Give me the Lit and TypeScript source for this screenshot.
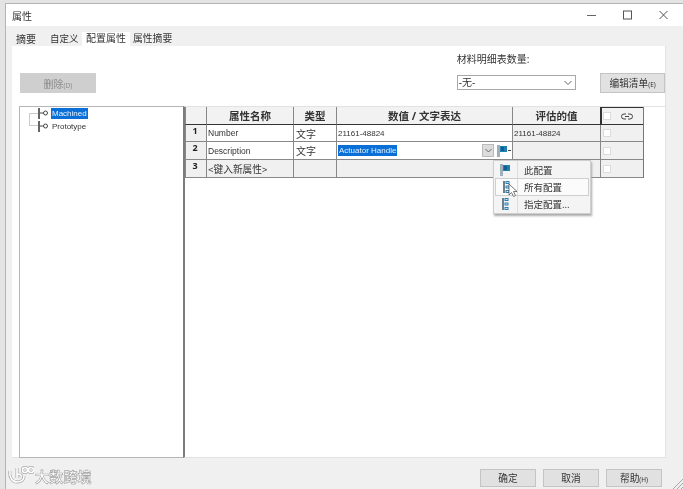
import { LitElement, html, css, svg, unsafeCSS } from "lit";
import { customElement } from "lit/decorators.js";

const FONT = unsafeCSS(`"Noto Sans", "Noto Sans CJK SC", sans-serif`);
const LATIN = unsafeCSS(`"Liberation Sans", "Noto Sans CJK SC", sans-serif`);

const flagIcon = svg`<svg width="11" height="12" viewBox="0 0 11 12"><rect x="0" y="0" width="3" height="12" fill="#9fb0bc"/><path d="M3 1h7v6H3z" fill="#1f7fb0"/><rect x="4" y="2" width="3" height="4" fill="#0f5f90"/></svg>`;
const stackIcon = svg`<svg width="7" height="12" viewBox="0 0 7 12"><rect x="0" y="0" width="2" height="12" fill="#6d7f8e"/><g fill="#2a7fb0"><rect x="2.500" y="0" width="4" height="3"/><rect x="2.500" y="4.500" width="4" height="3"/><rect x="2.500" y="9" width="4" height="3"/></g><g fill="#dfe8ee"><rect x="3.500" y="1" width="2" height="1"/><rect x="3.500" y="5.500" width="2" height="1"/><rect x="3.500" y="10" width="2" height="1"/></g></svg>`;
const cfgIcon = svg`<svg width="12" height="11" viewBox="0 0 12 11"><path d="M1 0v11" stroke="#333" stroke-width="1.500"/><path d="M2 5h3.500" stroke="#444"/><circle cx="7.500" cy="5" r="2" fill="none" stroke="#444"/></svg>`;

@customElement("app-root")
export class AppRoot extends LitElement {
  static styles = css`
    :host { display: block; position: relative; width: 683px; height: 489px; overflow: hidden; background: #e4e4e4; font-family: ${FONT}; color: #333; filter: blur(0.4px); }
    .win { margin: 3px 0 0 5px; width: 678px; height: 486px; background: #f0f0f0; border: 1px solid #b4b4b4; border-right: 0; border-bottom: 0; box-sizing: border-box; display: flex; flex-direction: column; }
    .title { height: 22px; background: #fff; display: flex; align-items: center; padding-left: 6px; font-size: 10px; flex: none; }
    .title .t { flex: 1; }
    .caps { display: flex; align-items: center; gap: 27px; padding-right: 15px; }
    .tabs { height: 20px; display: flex; align-items: flex-end; padding-left: 6px; flex: none; font-size: 10px; }
    .tab { height: 14px; line-height: 14px; text-align: center; box-sizing: border-box; padding: 0 4px; white-space: nowrap; }
    .tab.second { margin-left: 6px; padding-right: 3.500px; font-size: 9.500px; }
    .tab.a { background: #fff; line-height: 12px; }
    .tab.last { padding-left: 3px; font-size: 9.800px; }
    .panel { margin-left: 6px; width: 654px; height: 412px; background: #fff; border-right: 1px solid #e2e2e2; border-bottom: 1px solid #e2e2e2; box-sizing: border-box; flex: none; display: flex; flex-direction: column; }
    .top { height: 60px; display: flex; flex: none; padding-left: 8px; box-sizing: border-box; }
    .del { margin-top: 27px; width: 76px; height: 20px; background: #cfcfcf; color: #8c8c8c; font-size: 10px; display: flex; align-items: center; justify-content: center; }
    .del small, .btn small { font-size: 6.500px; }
    .qty { margin-left: 361px; padding-top: 5px; width: 120px; font-size: 10px; }
    .sel { margin-top: 9px; width: 119px; height: 15px; border: 1px solid #a8a8a8; box-sizing: border-box; display: flex; align-items: center; justify-content: space-between; padding: 0 3px 0 1px; font-size: 10px; line-height: 13px; }
    .btn { background: #e1e1e1; border: 1px solid #c4c4c4; box-sizing: border-box; display: flex; align-items: center; justify-content: center; font-size: 9.700px; color: #333; white-space: nowrap; }
    .edit { margin: 27px 0 0 24px; width: 65px; height: 20px; }
    .main { height: 352px; display: flex; margin-left: 7px; flex: none; }
    .tree { width: 164px; height: 100%; border: 1px solid #b5b5b5; border-right: 0; box-sizing: border-box; position: relative; font-family: ${LATIN}; font-size: 8px; }
    .node { display: flex; align-items: center; height: 12px; margin-bottom: 1px; padding-left: 18px; gap: 1px; }
    .node span { padding: 0 1px; line-height: 11px; }
    .node .hl { background: #0a6fd6; color: #e8f2ff; }
    .branch { position: absolute; left: 9px; top: 6px; width: 9px; height: 13px; border: 1px solid #ccc; border-right: 0; box-sizing: border-box; }
    .right { flex: 1; border-left: 2px solid #7c7c7c; box-sizing: border-box; min-width: 0; border-bottom: 1px solid #e2e2e2; border-top: 1px solid #e2e2e2; }
    .grid { display: grid; grid-template-columns: 21px 87px 43px 176px 88px 43px; grid-template-rows: 18px 17px 18px 18px; width: 458px; border-right: 1px solid #777; box-sizing: content-box; }
    .c { border-left: 1px solid #888; border-bottom: 1px solid #888; box-sizing: border-box; display: flex; align-items: center; padding-left: 1px; font-family: ${LATIN}; font-size: 8px; min-width: 0; white-space: nowrap; background: #fff; }
    .c.lbl { font-size: 8.500px; }
    .c.g { background: #f0f0f0; }
    .h { border-bottom: 1px solid #333; justify-content: center; font-family: ${FONT}; font-weight: 700; font-size: 10.500px; background: #f2f2f2; padding-left: 0; color: #333; }
    .n { background: #f0f0f0; font-family: ${FONT}; font-weight: 700; font-size: 9px; justify-content: center; align-items: flex-start; padding: 0 2px 0 0; color: #222; line-height: 11px; }
    .zh { font-family: ${FONT}; font-size: 10px; padding-left: 2px; }
    .zh2 { font-family: ${FONT}; font-size: 9.700px; }
    .selText { background: #0a6fd6; color: #e0efff; padding: 0 1px; line-height: 11px; }
    .v { justify-content: space-between; padding-right: 0; }
    .dropwrap { display: flex; align-items: center; }
    .drop { width: 12px; height: 13px; background: #dcdcdc; border: 1px solid #bbb; box-sizing: border-box; display: flex; align-items: center; justify-content: center; }
    .fbtn { width: 18px; height: 15px; display: flex; align-items: center; padding-left: 3px; box-sizing: border-box; }
    .chk { width: 8px; height: 8px; background: #fff; border: 1px solid #dcdcdc; box-sizing: border-box; margin-left: 1px; }
    .hc { justify-content: flex-start; padding-left: 0; border-left: 2px solid #333; gap: 10px; border-bottom: 1px solid #333; border-top: 1px solid #333; background: #f2f2f2; }
    .menu { position: absolute; left: 493px; top: 160px; width: 98px; height: 54px; background: #f4f4f4; border: 1px solid #cfcfcf; box-sizing: border-box; box-shadow: 1px 2px 2px #aaa; font-size: 9.500px; }
    .mi { height: 17.300px; display: flex; align-items: center; box-sizing: border-box; }
    .mi .ic { width: 23px; display: flex; justify-content: center; flex: none; border-right: 1px solid #ddd; height: 100%; align-items: center; }
    .mi .lb { padding-left: 6px; }
    .mi.on { background: #fbfbfb; border: 1px solid #cfcfcf; margin: 0 1px; }
    .mi.on .ic { width: 21px; }
    .cursor { position: absolute; left: 508px; top: 183px; }
    .foot { flex: 1; position: relative; display: flex; justify-content: flex-end; padding: 11px 21px 0 0; gap: 7px; box-sizing: border-box; }
    .foot .btn { width: 56px; height: 18px; }
    .wm { position: absolute; left: 29px; top: 8px; font-size: 14px; font-weight: 700; color: #fff; letter-spacing: 0.2px; -webkit-text-stroke: 0.7px #a8a8a8; }
    .logo { position: absolute; left: 2px; top: 8px; }
    .grip { position: absolute; right: 0; bottom: 0; }
  `;

  render() {
    return html`
      <div class="win">
        <div class="title">
          <div class="t">属性</div>
          <div class="caps">
            <svg width="9" height="10" viewBox="0 0 9 10"><path d="M0 5.500h9" stroke="#666"/></svg>
            <svg width="9" height="10" viewBox="0 0 9 10"><rect x=".5" y="1" width="8" height="8" fill="none" stroke="#555"/></svg>
            <svg width="9" height="10" viewBox="0 0 9 10"><path d="M.5 1l8 8M8.500 1l-8 8" stroke="#555"/></svg>
          </div>
        </div>
        <div class="tabs">
          <div class="tab">摘要</div><div class="tab second">自定义</div>
          <div class="tab a">配置属性</div><div class="tab last">属性摘要</div>
        </div>
        <div class="panel">
          <div class="top">
            <div class="del"><span>删除<small>(D)</small></span></div>
            <div class="qty">材料明细表数量:
              <div class="sel"><span>-无-</span>
                <svg width="8" height="6" viewBox="0 0 8 6"><path d="M.5 1l3.500 3.500L7.500 1" fill="none" stroke="#666"/></svg>
              </div>
            </div>
            <div class="btn edit"><span>编辑清单<small>(E)</small></span></div>
          </div>
          <div class="main">
            <div class="tree">
              <div class="branch"></div>
              <div class="node">${cfgIcon}<span class="hl">Machined</span></div>
              <div class="node">${cfgIcon}<span>Prototype</span></div>
            </div>
            <div class="right">
              <div class="grid">
                <div class="c h"></div><div class="c h">属性名称</div><div class="c h">类型</div>
                <div class="c h">数值 / 文字表达</div><div class="c h">评估的值</div>
                <div class="c hc"><div class="chk"></div>
                  <svg width="12" height="7" viewBox="0 0 12 7"><path d="M5 1H3a2.500 2.500 0 000 5h2M7 1h2a2.500 2.500 0 010 5H7M4 3.500h4" fill="none" stroke="#444"/></svg>
                </div>

                <div class="c n">1</div><div class="c lbl">Number</div><div class="c zh">文字</div>
                <div class="c">21161-48824</div><div class="c g">21161-48824</div><div class="c g"><div class="chk"></div></div>

                <div class="c n">2</div><div class="c lbl">Description</div><div class="c zh">文字</div>
                <div class="c v"><span class="selText">Actuator Handle</span>
                  <span class="dropwrap"><span class="drop"><svg width="7" height="5" viewBox="0 0 7 5"><path d="M.5 1l3 3 3-3" fill="none" stroke="#666"/></svg></span><span class="fbtn">${flagIcon}<svg width="3" height="3"><rect y="1" width="3" height="1" fill="#444"/></svg></span></span>
                </div>
                <div class="c g"></div><div class="c g"><div class="chk"></div></div>

                <div class="c n">3</div><div class="c g zh2">&lt;键入新属性&gt;</div><div class="c g"></div>
                <div class="c g"></div><div class="c g"></div><div class="c g"><div class="chk"></div></div>
              </div>
            </div>
          </div>
        </div>
        <div class="foot">
          <svg class="logo" width="26" height="18" viewBox="0 0 26 18"><g fill="none" stroke="#a8a8a8" stroke-width="3"><path d="M2 5c-1 6 2 11 7 11s7-3 7-6"/><path d="M9 2v10M9 9c3-2 5 0 4 3"/><circle cx="17" cy="4" r="2.500"/><circle cx="23" cy="4" r="2.500"/></g><g fill="none" stroke="#fff" stroke-width="1.600"><path d="M2 5c-1 6 2 11 7 11s7-3 7-6"/><path d="M9 2v10M9 9c3-2 5 0 4 3"/><circle cx="17" cy="4" r="2.500"/><circle cx="23" cy="4" r="2.500"/></g></svg>
          <div class="wm">大数跨境</div>
          <div class="btn">确定</div><div class="btn">取消</div><div class="btn"><span>帮助<small>(H)</small></span></div>
          <svg class="grip" width="12" height="12" viewBox="0 0 12 12"><path d="M12 2L2 12M12 6L6 12M12 10l-2 2" stroke="#a8a8a8"/></svg>
        </div>
      </div>
      <div class="menu">
        <div class="mi"><div class="ic">${flagIcon}</div><div class="lb">此配置</div></div>
        <div class="mi on"><div class="ic">${stackIcon}</div><div class="lb">所有配置</div></div>
        <div class="mi"><div class="ic">${stackIcon}</div><div class="lb">指定配置...</div></div>
      </div>
      <svg class="cursor" width="10" height="15" viewBox="0 0 10 15"><path d="M1 1v11l2.500-2.500 2 4 2-1-2-4H9z" fill="#fff" stroke="#555" stroke-width=".8"/></svg>`;
  }
}
